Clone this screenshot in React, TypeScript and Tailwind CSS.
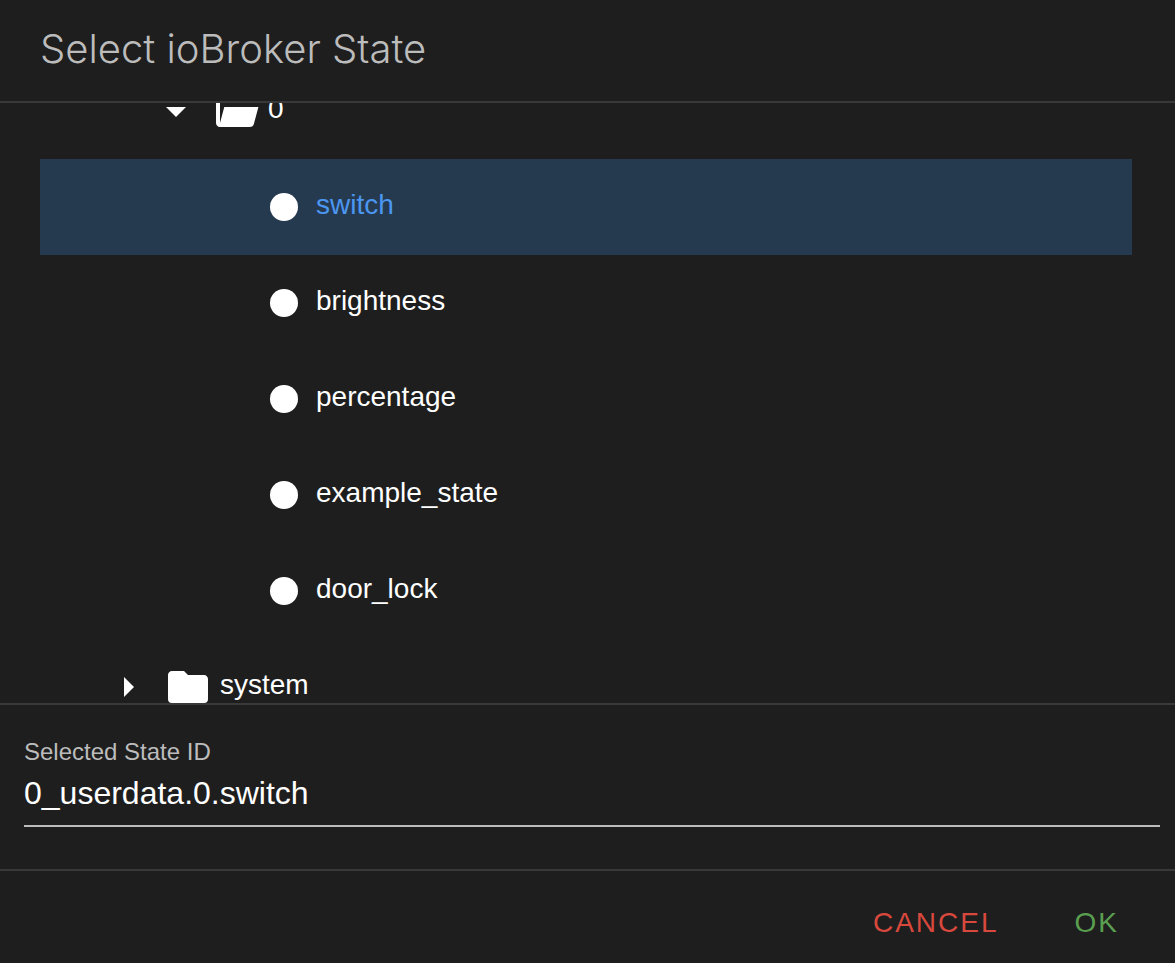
import { useState } from "react";

type Node = { id: string; name: string; level: number; kind: "open" | "closed" | "state" };

const nodes: Node[] = [
  { id: "0_userdata.0", name: "0", level: 2, kind: "open" },
  { id: "0_userdata.0.switch", name: "switch", level: 3, kind: "state" },
  { id: "0_userdata.0.brightness", name: "brightness", level: 3, kind: "state" },
  { id: "0_userdata.0.percentage", name: "percentage", level: 3, kind: "state" },
  { id: "0_userdata.0.example_state", name: "example_state", level: 3, kind: "state" },
  { id: "0_userdata.0.door_lock", name: "door_lock", level: 3, kind: "state" },
  { id: "system", name: "system", level: 1, kind: "closed" },
];

const indent: Record<number, string> = { 1: "pl-16", 2: "pl-28", 3: "pl-40" };

const arrowPath = { open: "M7,10L12,15L17,10H7Z", closed: "M10,17L15,12L10,7V17Z" };

const iconPath = {
  open: "M19,20H4C2.89,20 2,19.1 2,18V6C2,4.89 2.89,4 4,4H10L12,6H19A2,2 0 0,1 21,8H21L4,8V18L6.14,10H23.21L20.93,18.5C20.7,19.37 19.92,20 19,20Z",
  closed: "M10,4H4C2.89,4 2,4.89 2,6V18A2,2 0 0,0 4,20H20A2,2 0 0,0 22,18V8C22,6.89 21.1,6 20,6H12L10,4Z",
  state: "M12,5A7,7 0 1,0 12,19A7,7 0 1,0 12,5Z",
};

function Icon({ d }: { d: string }) {
  return (
    <svg viewBox="0 0 24 24" className="size-12 shrink-0 fill-white" aria-hidden="true">
      <path d={d} />
    </svg>
  );
}

function TreeRow({ node, selected, onSelect }: { node: Node; selected: boolean; onSelect: () => void }) {
  return (
    <li>
      <button
        type="button"
        onClick={onSelect}
        className={`flex h-24 w-full items-center text-left ${indent[node.level]} ${
          selected ? "bg-[#263a4f] text-[#4b96f0]" : "text-white"
        }`}
      >
        {node.kind === "state" ? <span className="w-12 shrink-0" /> : <Icon d={arrowPath[node.kind]} />}
        <span className="ml-3 flex">
          <Icon d={iconPath[node.kind]} />
        </span>
        <span className="ml-2 pb-1 text-[28px] leading-8">{node.name}</span>
      </button>
    </li>
  );
}

export default function App() {
  const [selected, setSelected] = useState("0_userdata.0.switch");

  return (
    <main className="flex h-screen flex-col bg-[#1e1e1e] font-['Liberation_Sans',Arial,sans-serif] text-white">
      <header className="shrink-0 border-b-2 border-[#393939] px-10 pt-[25px] pb-7">
        <h1 className="font-['Inter',sans-serif] text-[40px] leading-[48px] font-light text-[#bcbcbc]">
          Select ioBroker State
        </h1>
      </header>

      <div className="min-h-0 flex-1 overflow-hidden pr-[43px] pl-10">
        <ul className="-mt-10">
          {nodes.map((node) => (
            <TreeRow
              key={node.id}
              node={node}
              selected={node.id === selected}
              onSelect={() => setSelected(node.id)}
            />
          ))}
        </ul>
      </div>

      <section className="flex shrink-0 flex-col border-t-2 border-[#393939] pt-8 pr-[15px] pb-[42px] pl-6">
        <label htmlFor="state-id" className="text-2xl leading-[30px] text-[#bcbcbc]">
          Selected State ID
        </label>
        <input
          id="state-id"
          type="text"
          value={selected}
          onChange={(e) => setSelected(e.target.value)}
          className="h-[60px] w-full border-b-2 border-[#bcbcbc] bg-transparent pb-1.5 text-[32px] text-white outline-none"
        />
      </section>

      <footer className="flex shrink-0 justify-end gap-3 border-t-2 border-[#393939] pt-[17px] pr-6 pb-[5px] text-[28px] tracking-[2px]">
        <button type="button" className="h-[70px] px-8 text-[#d8483d]">
          CANCEL
        </button>
        <button type="button" className="h-[70px] px-8 text-[#5a9e4f]">
          OK
        </button>
      </footer>
    </main>
  );
}
